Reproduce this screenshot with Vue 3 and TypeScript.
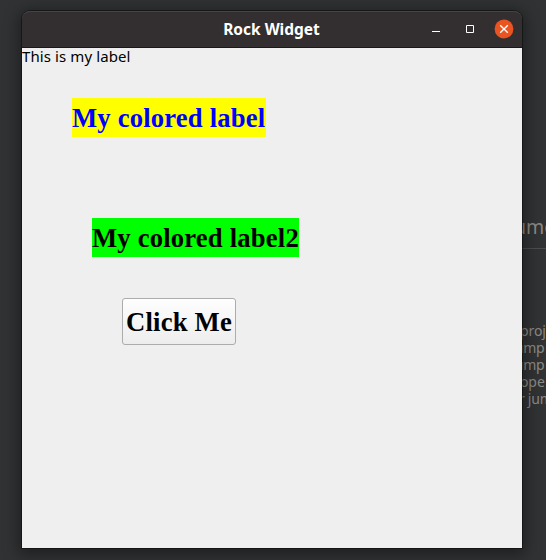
<script setup lang="ts">
import { ref } from 'vue'

const title = ref<string>('Rock Widget')
const backdropLines: string[] = ['proj', 'ump', 'ump', 'ope', 'r jum']
</script>

<template>
  <main class="desktop">
    <aside class="backdrop">
      <div class="backdrop-title">ume</div>
      <div class="backdrop-list">
        <div v-for="(line, i) in backdropLines" :key="i" class="backdrop-line" :class="{ tight: i === 4, clipped: i === 1 || i === 2 }">{{ line }}</div>
      </div>
    </aside>
    <section class="window">
      <header class="titlebar">
        <h1 class="title">{{ title }}</h1>
        <div class="controls">
          <svg class="control" viewBox="0 0 20 20"><path d="M6 12.5h8" stroke="#fff" /></svg>
          <svg class="control" viewBox="0 0 20 20"><path d="M6.5 6.5h7v7h-7z" fill="none" stroke="#fff" /></svg>
          <svg class="control" viewBox="0 0 20 20">
            <circle cx="10" cy="10" r="9.4" fill="#e95420" />
            <path d="M6.2 6.2l7.6 7.6M13.8 6.2l-7.6 7.6" stroke="#fff" stroke-width="1.4" />
          </svg>
        </div>
      </header>
      <div class="content">
        <div class="plain">This is my label</div>
        <div class="label yellow">My colored label</div>
        <div class="label green">My colored label2</div>
        <button class="push" type="button">Click Me</button>
      </div>
    </section>
  </main>
</template>

<style>
body {
  margin: 0;
}
</style>

<style scoped>
.desktop {
  position: relative;
  width: 546px;
  height: 560px;
  overflow: hidden;
  background: #303234;
  font-family: "Noto Sans", "Open Sans", sans-serif;
}
.backdrop {
  box-sizing: border-box;
  width: 26px;
  height: 560px;
  margin-left: 520px;
  overflow: hidden;
  white-space: nowrap;
  color: #8c8982;
}
.backdrop-title {
  box-sizing: border-box;
  height: 249px;
  padding-top: 212px;
  border-bottom: 1px solid #4b4d4f;
  font-size: 19.5px;
  line-height: 30px;
  text-indent: -6px;
}
.backdrop-list {
  padding-top: 73px;
  font-size: 14px;
  line-height: 17px;
}
.backdrop-line {
  height: 17px;
  letter-spacing: -0.1px;
}
.clipped {
  text-indent: -5px;
  letter-spacing: -0.4px;
}
.tight {
  text-indent: -1px;
  word-spacing: -0.5px;
}
.window {
  position: absolute;
  left: 22px;
  top: 11px;
  width: 500px;
  height: 537px;
  border-radius: 8px 8px 0 0;
  box-shadow: 0 0 0 1px rgba(0, 0, 0, 0.4), 0 3px 16px 3px rgba(0, 0, 0, 0.42);
}
.titlebar {
  box-sizing: border-box;
  display: grid;
  grid-template-columns: 1fr auto 1fr;
  align-items: center;
  height: 37px;
  padding: 0 8px 1px 0;
  border-top: 1px solid #474544;
  border-bottom: 1px solid #1d171c;
  border-radius: 8px 8px 0 0;
  background: #332f30;
}
.title {
  grid-column: 2;
  margin: 0 0 1px 7px;
  color: #fff;
  font-size: 15.5px;
  font-weight: 700;
  line-height: 20px;
  letter-spacing: 0;
}
.controls {
  display: flex;
  justify-content: flex-end;
  gap: 14px;
}
.control {
  width: 20px;
  height: 20px;
}
.content {
  display: flex;
  flex-direction: column;
  align-items: flex-start;
  height: 500px;
  background: #efefef;
}
.plain {
  height: 50px;
  color: #000;
  font-size: 15px;
  line-height: 17px;
  letter-spacing: 0.1px;
  white-space: nowrap;
}
.label {
  height: 39px;
  font: 700 26.67px/40px "Liberation Serif", serif;
  letter-spacing: 0.18px;
  white-space: nowrap;
}
.yellow {
  width: 194px;
  margin-left: 50px;
  background: #ff0;
  color: #00f;
}
.green {
  width: 207px;
  margin: 81px 0 0 70px;
  background: #0f0;
  color: #000;
}
.push {
  box-sizing: border-box;
  width: 114px;
  height: 47px;
  margin: 41px 0 0 100px;
  padding: 2px 0 0;
  border: 1px solid #acacac;
  border-radius: 3px;
  background: linear-gradient(#fefefe, #ededed);
  color: #000;
  font: 700 26.67px/43px "Liberation Serif", serif;
  letter-spacing: 0.18px;
  white-space: nowrap;
}
</style>
